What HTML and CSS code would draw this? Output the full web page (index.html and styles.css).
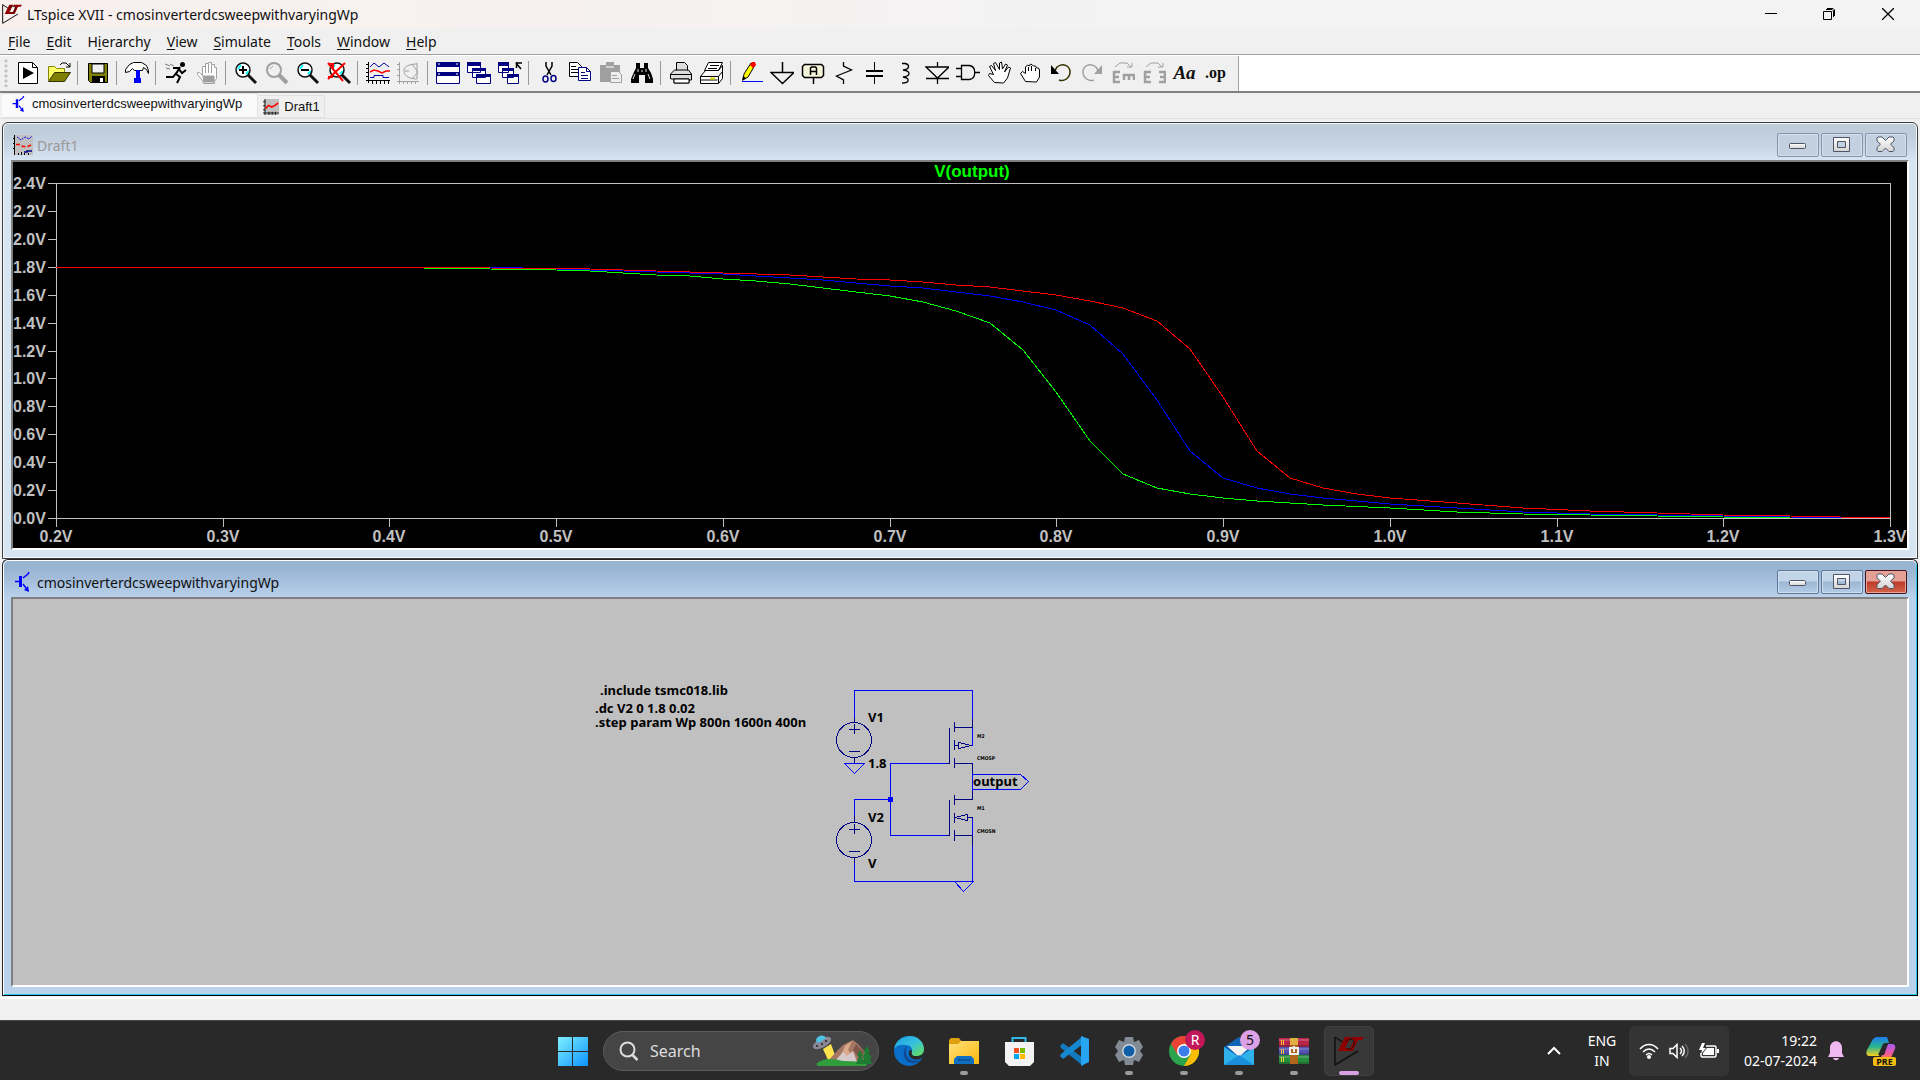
FILE: index.html
```html
<!DOCTYPE html>
<html lang="en">
<head>
<meta charset="utf-8">
<title>LTspice XVII - cmosinverterdcsweepwithvaryingWp</title>
<link rel="stylesheet" href="styles.css">
</head>
<body>
<svg class="defs" width="0" height="0" aria-hidden="true">
  <defs>
    <linearGradient id="glyph" x1="0" y1="0" x2="0" y2="1"><stop offset="0" stop-color="#fff"/><stop offset="1" stop-color="#d4d4d4"/></linearGradient>
    <linearGradient id="winlogo" x1="0" y1="0" x2="1" y2="1"><stop offset="0" stop-color="#7ff0ff"/><stop offset="1" stop-color="#0c93ff"/></linearGradient>
    <linearGradient id="folder" x1="0" y1="0" x2="1" y2="1"><stop offset="0" stop-color="#ffe07a"/><stop offset="1" stop-color="#fcb90d"/></linearGradient>
    <linearGradient id="edgeTop" x1="0" y1="0" x2="1" y2="1"><stop offset="0" stop-color="#1c9de0"/><stop offset=".5" stop-color="#35c1e0"/><stop offset="1" stop-color="#6be04a"/></linearGradient>
    <linearGradient id="copA" x1="0" y1="0" x2="0" y2="1"><stop offset="0" stop-color="#1e7cf0"/><stop offset=".5" stop-color="#27b58f"/><stop offset="1" stop-color="#f6d11e"/></linearGradient>
    <linearGradient id="copB" x1="0" y1="0" x2="0" y2="1"><stop offset="0" stop-color="#a45cf5"/><stop offset=".6" stop-color="#f0589a"/><stop offset="1" stop-color="#ff9a3c"/></linearGradient>
    <symbol id="min" viewBox="1 1 20 18"><rect x="2.500" y="8.500" width="16" height="5" rx="1" fill="url(#glyph)" stroke="#4e5468"/></symbol>
    <symbol id="max" viewBox="1 1 20 18"><path d="M2.500 2.500h16v14h-16zM6.500 6.500v6h8v-6z" fill="url(#glyph)" fill-rule="evenodd" stroke="#4e5468"/></symbol>
    <symbol id="close" viewBox="1 1 20 18"><path d="M3 2h4l3.500 3.500L14 2h4l1 1v3l-3.500 3.200L19 12.500v3l-1 1h-4l-3.500-3.500L7 16.500H3l-1-1v-3l3.500-3.300L2 6V3z" fill="url(#glyph)" stroke="#4e5468"/></symbol>
    <symbol id="lt" viewBox="0 0 30 30"><path d="M1 1v28L24 15M1 1l12 8" fill="none" stroke="#111" stroke-width="1.500"/><path d="M11 1h6l-6 11h7l-1 3H4zM18 1h12l-2 3h-4l-5 11h-4l5-11h-4z" fill="#900000"/><path d="M12 6c3-4 8-4 8 1s-4 8-7 5" fill="none" stroke="#111"/></symbol>
    <symbol id="tran" viewBox="0 0 20 20"><path d="M2 9.500h5M10 6l5-4 1-2M10 12l3 4" stroke="#00f" stroke-width="1.500" fill="none"/><path d="M6 4h3v11H6zM16 20l-5-2 4-4z" fill="#00f"/></symbol>
    <symbol id="wave" viewBox="0 0 20 20"><path fill="#c0c0c0" d="M1 0h19v20H1z"/><path d="M2.500 0v20M0 17.500h20M0 3.500h3M0 8.500h3M0 13.500h3M7.500 16v4M11.500 16v4M15.500 16v4" stroke="#000" fill="none"/><path d="M3 12l4-4 4 2 4-2 4-3" stroke="#f00" stroke-width="2" fill="none"/></symbol>
    <symbol id="wave3" viewBox="0 0 20 20"><path fill="#c0c0c0" d="M1 0h19v20H1z"/><path d="M1.500 0v20M0 3.500h2M0 8.500h2M0 13.500h2M5.500 18v2M8.500 17v3M11.500 18v2M15.500 18v2" stroke="#000" fill="none"/><path d="M4 2l4 3 4-3 4 2 3-3" stroke="#00f" fill="none" stroke-dasharray="2 1"/><path d="M3 9.500h4l3 2h5l4-2" stroke="#f00" stroke-width="1.500" fill="none" stroke-dasharray="4 2"/><path d="M11 17h3v-1h5" stroke="#000080" stroke-width="1.500" fill="none"/></symbol>
    <symbol id="lens" viewBox="0 0 24 24"><circle cx="9" cy="9" r="7" fill="#fff"/><path d="M4 8l3-4M12 13l3-3" stroke="#0ff" stroke-width="2"/><circle cx="9" cy="9" r="7" fill="none" stroke="currentColor" stroke-width="1.500"/><path d="M14 14l8 8" stroke="currentColor" stroke-width="3"/></symbol>
  </defs>
</svg>

<div class="screen">
<main class="app">
  <header class="titlebar">
    <svg class="app-icon" viewBox="0 0 30 30"><use href="#lt"/></svg>
    <h1>LTspice XVII - cmosinverterdcsweepwithvaryingWp</h1>
    <div class="caption-buttons">
      <button aria-label="Minimize"><svg viewBox="0 0 12 12"><path d="M0 5.500h12" stroke="#000"/></svg></button>
      <button aria-label="Restore"><svg viewBox="0 0 12 12"><path d="M.5 3.500h8v8h-8zM3 1.500h6l1.500 1.500v6M4 .5h6l1.500 1.500v6" fill="none" stroke="#000"/></svg></button>
      <button aria-label="Close"><svg viewBox="0 0 12 12"><path d="M0 0l12 12M12 0L0 12" stroke="#000" stroke-width="1.300"/></svg></button>
    </div>
  </header>

  <nav class="menubar">
    <button><u>F</u>ile</button><button><u>E</u>dit</button><button>H<u>i</u>erarchy</button><button><u>V</u>iew</button><button><u>S</u>imulate</button><button><u>T</u>ools</button><button><u>W</u>indow</button><button><u>H</u>elp</button>
  </nav>

  <div class="toolstrip">
  <div class="toolbar" role="toolbar">
    <span class="grip"></span>
    <button aria-label="New schematic"><svg viewBox="0 0 24 24"><path d="M2.500 1.500h14l5 5v16h-19z" fill="#fff" stroke="#000"/><path d="M16.500 1.500v5h5" fill="none" stroke="#000"/><path d="M7 6l11 6-11 6z"/></svg></button>
    <button aria-label="Open"><svg viewBox="0 0 24 24"><path d="M1.500 19.500v-14h6l2 2h8v4" fill="#ff6" stroke="#880"/><path d="M1.500 20.500l6-9h16l-6 9z" fill="#808000" stroke="#330"/><path d="M13 4l2-2h4l4 4M23 2v4h-4" fill="none" stroke="#000"/></svg></button>
    <span class="sep"></span>
    <button aria-label="Save"><svg viewBox="0 0 24 24"><path d="M2.500 2.500h19v19h-17l-2-2z" fill="#808000" stroke="#000"/><path d="M6 3h12v9H6z" fill="#efefef" stroke="#000"/><path d="M6 15h13v6H6z"/><path d="M14 17h3v4h-3z" fill="#fff"/></svg></button>
    <span class="sep"></span>
    <button aria-label="Control panel"><svg viewBox="0 0 24 24"><path d="M.5 8.500l4-5 4-2h8l5 3 2 5v3l-2-4-3-2-1 3h-8l-2-2-3 3-4 1z" fill="#fff" stroke="#000"/><path d="M11 9h4v8h1v5h-7v-5h2z" fill="#00f"/></svg></button>
    <span class="sep"></span>
    <button aria-label="Run"><svg viewBox="0 0 24 24"><circle cx="18.500" cy="3.500" r="2.500"/><path d="M16 6l-4 7 4 3-3 6M13 11l-4 5H2M9 7h5l4 5 4-3" stroke="#000" stroke-width="2" fill="none"/><path d="M1 3l5 2M2 7l4 1M6 3l4 2" stroke="#777"/></svg></button>
    <button class="off" aria-label="Halt"><svg viewBox="0 0 24 24"><path d="M8.500 22.500l-1-3-5-6v-2h2l3 3V5.500h3v-3h3v-1h3v2h3v3h2v11l-2 3v2z" fill="#fff" stroke="currentColor"/><path d="M8 15h11v6H9zM10.500 4v8M13.500 3v9M16.500 4v8" fill="currentColor" stroke="currentColor"/></svg></button>
    <span class="sep"></span>
    <button aria-label="Zoom in"><svg viewBox="0 0 24 24"><use href="#lens"/><path d="M5 9h8M9 5v8" stroke="#000" stroke-width="2"/></svg></button>
    <button class="off" aria-label="Pan"><svg viewBox="0 0 24 24"><circle cx="9" cy="9" r="7" fill="none" stroke="currentColor" stroke-width="2"/><path d="M14 14l8 8" stroke="currentColor" stroke-width="4"/><path d="M5 8l3-3" stroke="currentColor"/></svg></button>
    <button aria-label="Zoom out"><svg viewBox="0 0 24 24"><use href="#lens"/><path d="M5 9h8" stroke="#000" stroke-width="2"/></svg></button>
    <button aria-label="Zoom full extents"><svg viewBox="0 0 24 24"><use href="#lens" x="1"/><path d="M1 2l15 18M18 2L1 18M1 16h5M2 3h4v4" stroke="#f00" stroke-width="2" fill="none"/></svg></button>
    <span class="sep"></span>
    <button aria-label="Autorange"><svg viewBox="0 0 24 24"><path d="M2.500 1v21M0 19.500h24M0 3.500h3M0 7.500h3M0 11.500h3M0 15.500h3M6.500 19v4M10.500 19v4M14.500 19v4M18.500 19v4M22.500 19v4" stroke="#000"/><path d="M4 6l4-4 5 4 5-4 5 4" stroke="#00a" fill="none"/><path d="M4 11l4-2 4 1 4 2 4-2h4" stroke="#f00" stroke-width="1.500" fill="none"/><path d="M4 16.500h4v-2h9v2h6" stroke="#00a" fill="none"/></svg></button>
    <button class="off" aria-label="Smith chart"><svg viewBox="0 0 24 24"><path d="M2.500 1v22M0 20.500h22M0 3.500h3M0 8.500h3M0 14.500h3M6.500 20v3M10.500 20v3M14.500 20v3M18.500 20v3M20 2v16M20 3c-7 0-13 2-13 7s6 8 13 8M15 3l6 8-6 7M8 10h4" stroke="currentColor" fill="none"/></svg></button>
    <span class="sep"></span>
    <button aria-label="Tile windows"><svg viewBox="0 0 24 24"><path d="M.5 1.500h23v21H.5z" fill="#fff" stroke="#000080"/><path d="M0 2h24v4H0zM0 11h24v4H0z" fill="#000080"/><path d="M2 3h2M20 3h2M2 13h2M20 13h2" stroke="#fff"/></svg></button>
    <button aria-label="Cascade windows"><svg viewBox="0 0 24 24"><g fill="#fff" stroke="#000080"><path d="M.5 1.500h13v10H.5zM5.500 7.500h13v9h-13zM9.500 13.500h14v9h-14z"/></g><path d="M0 1h14v4H0zM5 7h14v3H5zM9 13h15v3H9z" fill="#000080"/></svg></button>
    <button aria-label="Close windows"><svg viewBox="0 0 24 24"><g fill="#fff" stroke="#000080"><path d="M.5 1.500h10v10H.5zM4.500 7.500h11v9h-11zM9.500 13.500h11v9h-11z"/></g><path d="M0 1h11v4H0zM4 7h12v3H4zM9 13h12v3H9z" fill="#000080"/><path d="M18 2h6M18.500 1v6M18 2l5 6" stroke="#000" stroke-width="1.500"/></svg></button>
    <span class="sep"></span>
    <button aria-label="Cut"><svg viewBox="0 0 24 24"><path d="M9 1v4l5 9M15 1v4l-5 9" stroke="#000" stroke-width="1.500" fill="none"/><ellipse cx="8.500" cy="18" rx="2.500" ry="3" fill="none" stroke="#000080" stroke-width="1.500"/><ellipse cx="16.500" cy="17.500" rx="2.500" ry="3" fill="none" stroke="#000080" stroke-width="1.500"/></svg></button>
    <button aria-label="Copy"><svg viewBox="0 0 24 24"><path d="M1.500 1.500h8l4 4v10h-12z" fill="#fff" stroke="#000"/><path d="M3 5.500h5M3 8.500h7M3 11.500h7" stroke="#000"/><path d="M10.500 6.500h8l4 4v9h-12z" fill="#fff" stroke="#000080"/><path d="M18.500 6.500v4h4M13 11.500h4M13 14.500h7M13 17.500h7" stroke="#000080" fill="none"/></svg></button>
    <button class="off" aria-label="Paste"><svg viewBox="0 0 24 24"><path d="M1 4h6V1h8v3h6v7h-9v10H1z" fill="currentColor"/><path d="M7 6h8" stroke="#fff"/><path d="M11.500 10.500h8l3 3v8h-11z" fill="#eee" stroke="currentColor"/><path d="M13 14.500h5M13 17.500h7" stroke="currentColor"/></svg></button>
    <button aria-label="Find"><svg viewBox="0 0 24 24"><path d="M6 2h4v5h4V2h4v5l3 5 2 6v4h-8v-8h-6v8H1v-4l3-7 2-4z"/><path d="M8 8v3M5 13l-2 5M18 13l2 5M16 8v3M12 9v2" stroke="#ddd"/></svg></button>
    <span class="sep"></span>
    <button aria-label="Print"><svg viewBox="0 0 24 24"><path d="M7.500 9.500v-8h8l3 3v5M1.500 18v-5l4-4h14l3 4v6h-3M5 18h15v4H5zM1.500 13.500h21M2 18h4" fill="#ddd" stroke="#000"/><path d="M5 18h15v4H5z" fill="#fff" stroke="#000"/></svg></button>
    <button aria-label="Print setup"><svg viewBox="0 0 24 24"><path d="M4.500 9.500l4-8h14l-4 8zM.5 15.500l5-6h13l4-5v13l-4 5H.5zM.5 15.500h18l4-5M18.500 15.500v7M.5 19h17" fill="#fff" stroke="#000"/><path d="M10 4.500h9M8 7.500h9" stroke="#000"/><path d="M10 17.500h5" stroke="#dd0" stroke-width="2"/></svg></button>
    <span class="sep"></span>
    <button aria-label="Draw wire"><svg viewBox="0 0 24 24"><path d="M4 19l1-6L12 2l4 2-7 12z" fill="#ff0" stroke="#000"/><path d="M11 4l2-3h3l1 3-3 3z" fill="#f00"/><path d="M3 20l1-5 3 2z"/><path d="M3 20.500h21" stroke="#00f"/></svg></button>
    <button aria-label="Ground"><svg viewBox="0 0 24 24"><path d="M12.500 1v10M1 11.500h23l-11.500 11z" stroke="#000" stroke-width="1.500" fill="none"/></svg></button>
    <button aria-label="Label net"><svg viewBox="0 0 24 24"><path d="M3.500 3.500h17l2 2v9l-2 2h-17l-2-2v-9z" fill="#f4f4d8" stroke="#000" stroke-width="1.500"/><path d="M12.500 17v6M9.500 14V7l1-1h4l1 1v7M10 10.500h6" stroke="#000" stroke-width="1.500" fill="none"/></svg></button>
    <button aria-label="Resistor"><svg viewBox="0 0 24 24"><path d="M11.500 1v4l8 4-15 6 7 4v4" stroke="#000" stroke-width="1.300" fill="none"/></svg></button>
    <button aria-label="Capacitor"><svg viewBox="0 0 24 24"><path d="M11.500 1v8M11.500 15v8" stroke="#000"/><path d="M3 10h17M3 15h17" stroke="#000" stroke-width="2"/></svg></button>
    <button aria-label="Inductor"><svg viewBox="0 0 24 24"><path d="M8 2.500h3c5 1 5 6-2 6.500 8 1 8 6 0 7 7 1 7 6-1 6" stroke="#000" stroke-width="1.300" fill="none"/></svg></button>
    <button aria-label="Diode"><svg viewBox="0 0 24 24"><path d="M12.500 1v5M12.500 17v6M1 6h23l-11.500 11zM1 17.500h23" stroke="#000" stroke-width="1.300" fill="none"/></svg></button>
    <button aria-label="Component"><svg viewBox="0 0 24 24"><path d="M5.500 4.500h8c7 1 7 13 0 14h-8zM0 7.500h5M0 15.500h5M19 11.500h5" stroke="#000" stroke-width="1.300" fill="none"/></svg></button>
    <button aria-label="Move"><svg viewBox="0 0 24 24"><path d="M7.500 21.500l-6-7 1-2 4 1-4-8 2-1 4 5-2-7 2-1 4 7V2l2-1 1 7 3-5 2 1-3 7 4-5 2 1-3 10-4 5z" fill="#fff" stroke="#000"/></svg></button>
    <button aria-label="Drag"><svg viewBox="0 0 24 24"><path d="M7.500 20.500l-5-8 2-2 3 2V6l2-2 2 1 1-2 2 1 1 1h2l1 2h2l1 2v7l-3 5z" fill="#fff" stroke="#000"/><path d="M10.500 6v4M13.500 5v5M17.500 7v3" stroke="#000"/></svg></button>
    <button aria-label="Undo"><svg viewBox="0 0 24 24"><path d="M5 11l3-5c6-5 13-1 13 5s-6 10-11 8" stroke="#330" stroke-width="1.500" fill="none"/><path d="M2 4v9h8z"/></svg></button>
    <button class="off" aria-label="Redo"><svg viewBox="0 0 24 24"><path d="M19 11l-3-5C10 1 3 5 3 11s6 10 11 8" stroke="currentColor" stroke-width="1.500" fill="none"/><path d="M22 4v9h-8z" fill="currentColor"/></svg></button>
    <button class="off" aria-label="Rotate"><svg viewBox="0 0 24 24"><path d="M2 11h7M2 16h6M2 21h7M3 10v12M13 13v6M12 14h12M18 13v6M23 13v6" stroke="currentColor" stroke-width="2.500"/><path d="M4 6l5-4h7l4 4M21 2v4h-5" stroke="currentColor" fill="none"/></svg></button>
    <button class="off" aria-label="Mirror"><svg viewBox="0 0 24 24"><path d="M2 11h7M2 16h6M2 21h7M3 10v12M17 11h7M18 16h6M17 21h7M23 10v12" stroke="currentColor" stroke-width="2.500"/><path d="M4 6l5-4h7l4 4M21 2v4h-5" stroke="currentColor" fill="none"/></svg></button>
    <button class="serif-label">Aa</button>
    <button class="op-label">.op</button>
  </div>
  </div>

  <div class="tabs" role="tablist">
    <button class="tab active" role="tab"><svg viewBox="0 0 20 20"><use href="#tran"/></svg>cmosinverterdcsweepwithvaryingWp</button>
    <button class="tab" role="tab"><svg viewBox="0 0 20 20"><use href="#wave"/></svg>Draft1</button>
  </div>

  <div class="mdi">
    <section class="window">
      <div class="window-title">
        <svg class="window-icon" viewBox="0 0 20 20"><use href="#wave3"/></svg>
        <h2>Draft1</h2>
        <button aria-label="Minimize"><svg viewBox="0 0 20 18"><use href="#min"/></svg></button>
        <button aria-label="Maximize"><svg viewBox="0 0 20 18"><use href="#max"/></svg></button>
        <button aria-label="Close"><svg viewBox="0 0 20 18"><use href="#close"/></svg></button>
      </div>
      <svg class="pane plot" viewBox="13 162 1894 386">
        <path class="axis" d="M56.500 183.500h1834v335h-1834zM48 183.500h8M48 211.500h8M48 239.500h8M48 267.500h8M48 295.500h8M48 323.500h8M48 351.500h8M48 378.500h8M48 406.500h8M48 434.500h8M48 462.500h8M48 490.500h8M48 518.500h8M56.500 518v9M223.500 518v9M389.500 518v9M556.500 518v9M723.500 518v9M890.500 518v9M1056.500 518v9M1223.500 518v9M1390.500 518v9M1557.500 518v9M1723.500 518v9M1890.500 518v9"/>
        <g class="labels">
          <text x="13" y="189">2.4V</text><text x="13" y="217">2.2V</text><text x="13" y="245">2.0V</text><text x="13" y="273">1.8V</text><text x="13" y="301">1.6V</text><text x="13" y="329">1.4V</text><text x="13" y="357">1.2V</text><text x="13" y="384">1.0V</text><text x="13" y="412">0.8V</text><text x="13" y="440">0.6V</text><text x="13" y="468">0.4V</text><text x="13" y="496">0.2V</text><text x="13" y="524">0.0V</text>
        </g>
        <g class="labels middle">
          <text x="56" y="542">0.2V</text><text x="223" y="542">0.3V</text><text x="389" y="542">0.4V</text><text x="556" y="542">0.5V</text><text x="723" y="542">0.6V</text><text x="890" y="542">0.7V</text><text x="1056" y="542">0.8V</text><text x="1223" y="542">0.9V</text><text x="1390" y="542">1.0V</text><text x="1557" y="542">1.1V</text><text x="1723" y="542">1.2V</text><text x="1890" y="542">1.3V</text>
        </g>
        <text class="trace-name" x="972" y="177">V(output)</text>
        <g class="traces">
          <polyline stroke="#0f0" points="56,267 389,267 423,268 490,269 556,270 590,271 623,273 656,275 690,276 723,279 756,281 790,284 823,288 856,292 890,296 923,302 956,311 990,323 1023,350 1056,392 1090,441 1123,474 1157,488 1190,494 1223,498 1257,501 1290,503 1323,505 1390,508 1457,512 1523,514 1590,515 1657,516 1723,517 1790,518 1890,518"/>
          <polyline stroke="#00f" points="56,267 456,267 523,268 590,270 656,272 723,274 756,276 790,278 823,280 856,283 890,286 923,288 956,292 990,296 1023,302 1056,310 1090,325 1123,354 1157,400 1190,451 1223,478 1257,488 1290,494 1323,498 1357,501 1390,504 1457,508 1523,512 1590,514 1657,515 1723,516 1790,517 1890,518"/>
          <polyline stroke="#f00" points="56,267 440,267 490,268 590,269 656,271 723,273 790,275 856,279 890,280 923,282 956,285 990,287 1023,291 1056,295 1090,301 1123,308 1157,321 1190,349 1223,397 1257,451 1290,478 1323,488 1357,494 1390,498 1457,503 1523,508 1590,511 1657,513 1723,515 1790,516 1890,518"/>
        </g>
      </svg>
    </section>

    <section class="window focused">
      <div class="window-title">
        <svg class="window-icon" viewBox="0 0 20 20"><use href="#tran"/></svg>
        <h2>cmosinverterdcsweepwithvaryingWp</h2>
        <button aria-label="Minimize"><svg viewBox="0 0 20 18"><use href="#min"/></svg></button>
        <button aria-label="Maximize"><svg viewBox="0 0 20 18"><use href="#max"/></svg></button>
        <button class="close" aria-label="Close"><svg viewBox="0 0 20 18"><use href="#close"/></svg></button>
      </div>
      <svg class="pane schematic" viewBox="13 599 1894 386">
        <path class="wire" d="M854.500 718v-27.500h118v55M890.500 763.500h56M890.500 763v72.500h56M854.500 816v-16.500h36M972.500 763v36M972.500 817v64M972.500 774.500h48l8 7-8 8h-48M854.500 863v18.500h119M844.500 763.500h20l-10 10zM954.500 881.500h19l-10 10z"/>
        <path class="part" d="M854.500 718v4M854.500 757v6M854.500 816v6M854.500 857v6M849 729.500h11M854.500 724v10M849 751.500h11M849 829.500h11M854.500 824v10M849 851.500h11M946 763.500h3.500v-36M946 835.500h3.500v-36M954.500 722v10M954.500 740v10M954.500 758v10M954.500 727.500h18v-9M954.500 745.500h4v-3l13 3-13 3v-3M954.500 763.500h18v9M954.500 795v10M954.500 813v10M954.500 830v11M954.500 799.500h18v-9M954.500 817.500l13-3v6l-13-3M967.500 817.500h5M954.500 835.500h18v10"/>
        <circle class="part" cx="854" cy="740" r="17.500"/><circle class="part" cx="854" cy="840" r="17.500"/>
        <path fill="#00f" d="M888 797h5v5h-5z"/>
        <g class="note">
          <text x="600" y="695">.include tsmc018.lib</text><text x="595" y="713">.dc V2 0 1.8 0.02</text><text x="595" y="727">.step param Wp 800n 1600n 400n</text>
          <text x="868" y="722">V1</text><text x="868" y="768">1.8</text><text x="868" y="822">V2</text><text x="868" y="868">V</text><text x="973" y="786">output</text>
        </g>
        <g class="tiny"><text x="977" y="738">M2</text><text x="977" y="760">CMOSP</text><text x="977" y="810">M1</text><text x="977" y="833">CMOSN</text></g>
      </svg>
    </section>
  </div>
  <div class="statusbar"></div>
</main>

<footer class="taskbar">
  <div class="pinned">
    <button aria-label="Start"><svg viewBox="0 0 30 30"><path d="M0 1h14v14H0zM15 1h15v14H15zM0 16h14v14H0zM15 16h15v14H15z" fill="url(#winlogo)"/></svg></button>
    <label class="search">
      <svg class="search-icon" viewBox="0 0 20 20"><circle cx="8.500" cy="8.500" r="7" fill="none" stroke="#ddd" stroke-width="2"/><path d="M13.500 14l5 5" stroke="#ddd" stroke-width="2.500"/></svg>
      <input type="text" placeholder="Search" aria-label="Search">
      <svg class="scene" viewBox="0 0 60 32"><path d="M10 14l8-5 5 14-7 4z" fill="#ffe34d"/><path d="M14 27l10-11 6-6 10-5 5 4 7 8 3 10z" fill="#a87866"/><path d="M26 25l6-14 7-5-4 9 4 5-6 7z" fill="#dba98a"/><path d="M22 26l8-9 4 4 6-5 4 11z" fill="#d5c9cc"/><path d="M40 15l3-6 8 8-3 9z" fill="#80584a"/><path d="M3 29c6-6 17-6 27-3l25 1-2 4H5z" fill="#2f9d3b"/><path d="M54 11l3 6h-2l4 6h-2l2 6H48l3-6h-2l3-6h-2zM47 15l3 6h-2l4 8h-9l3-8h-2z" fill="#1d7b32"/><ellipse cx="9" cy="8" rx="10" ry="4.500" fill="#8b8796" transform="rotate(-28 9 8)"/><path d="M3 5c1-5 8-6 10-2l-4 3-5 2z" fill="#4fc4e8"/><path d="M3 11h2M8 9h2M12 6h2" stroke="#222" stroke-width="1.500"/></svg>
    </label>
    <button aria-label="Edge"><svg viewBox="0 0 30 30"><circle cx="15" cy="15" r="15" fill="#0a6fc8"/><path d="M0 13C2 3 10 0 16 0c8 0 14 6 14 13 0 6-5 8-9 7-3 0-4-2-3-4 1-4-2-7-6-7C6 8 2 10 0 13z" fill="url(#edgeTop)"/><path d="M13 10c-4 3-5 10 0 15 4 3 10 3 14-1-8 3-15-1-15-8 0-3 1-5 1-6z" fill="#114a93"/><path d="M18 15c-1 3 0 5 4 5s7-1 8-5v6l-4 2c-6 2-12-1-11-7 0-2 2-3 3-1z" fill="#292929"/></svg></button>
    <button class="running" aria-label="File Explorer"><svg viewBox="0 0 30 30"><path d="M0 4l2-2h8l3 4h17v6H0z" fill="#e0a010"/><path d="M0 8h9l3-3h18v23H0z" fill="url(#folder)"/><path d="M5 28v-5l3-3h14l3 3v5z" fill="#0f6fc0"/><path d="M9 24h12" stroke="#053f78"/></svg></button>
    <button aria-label="Microsoft Store"><svg viewBox="0 0 30 30"><path d="M8.500 8V2h13v6" fill="none" stroke="#30b8ea" stroke-width="2"/><path d="M1 6h29v20l-4 4H5l-4-4z" fill="#f3f3f3"/><path d="M10 12h5v5h-5z" fill="#f25022"/><path d="M16 12h5v5h-5z" fill="#7fba00"/><path d="M10 18h5v5h-5z" fill="#00a4ef"/><path d="M16 18h5v5h-5z" fill="#ffb900"/></svg></button>
    <button aria-label="Visual Studio Code"><svg viewBox="0 0 30 30"><path d="M1 10l3-3 20 15v8L2 12z" fill="#1279bd"/><path d="M1 20l3 3 20-15V0L2 18z" fill="#1688cf"/><path d="M22 0l8 3v23l-8 4z" fill="#27a5f2"/></svg></button>
    <button class="running" aria-label="Settings"><svg viewBox="0 0 30 30"><path d="M11 1h8l1 5 5-2 4 7-3 4 3 4-4 7-5-2-1 5h-8l-1-5-5 2-4-7 3-4-3-4 4-7 5 2z" fill="#828b94"/><circle cx="15" cy="15" r="7" fill="#cfd6dc"/><circle cx="15" cy="15" r="5.500" fill="#0f5ea8"/></svg></button>
    <button class="running" aria-label="Chrome"><svg viewBox="0 0 30 30"><circle cx="15" cy="15" r="15" fill="#2ba24c"/><path d="M2 7.500A15 15 0 0 1 28 7.500H15L8 18z" fill="#ea4335"/><path d="M28 7.500A15 15 0 0 1 15 30l7-12-7-10.500z" fill="#fbbc05"/><circle cx="15" cy="15" r="7" fill="#fff"/><circle cx="15" cy="15" r="5.500" fill="#3b7ded"/></svg><span class="badge ruby">R</span></button>
    <button class="running" aria-label="Mail"><svg viewBox="0 0 30 30"><path d="M0 11L15 1l15 10v17H0z" fill="#0f63b4"/><path d="M3 10h24l-12 11z" fill="#f2f2f2"/><path d="M0 11l15 10 15-10v18H0z" fill="#2fb2ea"/><path d="M0 29l15-10 15 10z" fill="#1b8edb"/></svg><span class="badge">5</span></button>
    <button class="running" aria-label="WinRAR"><svg viewBox="0 0 30 30"><path d="M0 2h30v9H0z" fill="#b9254a"/><path d="M0 11h30v8H0z" fill="#5353b5"/><path d="M0 19h30v9H0z" fill="#248e3c"/><path d="M0 4h30M0 13h30M0 21h30" stroke="#fff" stroke-opacity=".35"/><path d="M0 10h30M0 18h30M0 27h30" stroke="#222" stroke-opacity=".6"/><path d="M2 4h1v5H2zM4 4h1v5H4zM2 13h1v5H2zM4 13h1v5H4zM2 21h1v5H2zM4 21h1v5H4z" fill="#fc3"/><path d="M11 2h8v26h-8z" fill="#b0661c"/><path d="M11 2h8v7h-8z" fill="#e0b040"/><path d="M11 12h8v6h-8zM15 10v6" fill="none" stroke="#eee" stroke-width="2"/></svg></button>
    <button class="current" aria-label="LTspice"><svg viewBox="0 0 30 30"><use href="#lt"/></svg></button>
  </div>
  <div class="tray">
    <button class="caret" aria-label="Show hidden icons"><svg viewBox="0 0 14 9"><path d="M1 8l6-6 6 6" fill="none" stroke="#fff" stroke-width="2"/></svg></button>
    <button class="lang">ENG<br>IN</button>
    <button class="quick" aria-label="Network, volume, battery">
      <svg width="20" height="16" viewBox="0 0 20 16"><path d="M1 6c5-6 13-6 18 0M4 9c4-4 8-4 12 0M7 12c2-2 4-2 6 0" fill="none" stroke="#fff" stroke-width="1.500"/><circle cx="10" cy="14" r="2" fill="#fff"/></svg>
      <svg width="20" height="16" viewBox="0 0 20 16"><path d="M1 5.500h3l4-4v13l-4-4H1zM11 5c2 2 2 4 0 6M13 3c3 3 3 7 0 10" fill="none" stroke="#fff" stroke-width="1.500"/><path d="M16 1c4 4 4 10 0 14" fill="none" stroke="#666" stroke-width="1.500"/></svg>
      <svg width="20" height="16" viewBox="0 0 20 16"><path d="M7 3h9l1 1v9l-1 1H3l-1-1v-3" fill="none" stroke="#fff" stroke-width="1.500"/><path d="M8 5h7v7H4v-2zM18 6h2v4h-2zM3 0L0 7h3l-1 4 5-6H4l2-5z" fill="#fff"/></svg>
    </button>
    <button class="clock">19:22<br>02-07-2024</button>
    <button class="bell" aria-label="Notifications"><svg viewBox="0 0 16 20"><path d="M0 16l2-4V7c0-9 12-9 12 0v5l2 4zM5 17h6c-1 3-5 3-6 0z" fill="#f0b8f0"/></svg></button>
    <button class="copilot" aria-label="Copilot"><svg viewBox="0 0 30 30"><path d="M7 3l3-2h11l2 6h-5l-5 13H3c-3 0-3-4-2-6z" fill="url(#copA)"/><path d="M22 8h4c4 0 4 4 2 7l-4 9H14l2-5z" fill="url(#copB)"/><path d="M17 8h5l-4 11h-6z" fill="#292929"/></svg><span>PRE</span></button>
  </div>
</footer>
</div>
</body>
</html>
```
FILE: styles.css
```css
* { box-sizing: border-box; }
body { margin: 0; background: #f0f0f0; font-family: "Noto Sans", "Open Sans", sans-serif; font-size: 14px; color: #111; }
button { margin: 0; padding: 0; border: 0; background: none; font: inherit; color: inherit; }
svg { display: block; }
h1, h2 { margin: 0; font-weight: 400; }
.defs { position: absolute; }
.screen { display: flex; flex-direction: column; min-height: 100vh; }
.app { display: flex; flex-direction: column; flex: 1; }

.titlebar { display: flex; align-items: center; height: 28px; background: linear-gradient(90deg, #f9f0ee, #f3f3f3 60%); }
.app-icon { width: 20px; height: 20px; margin: 0 5px 0 2px; }
.titlebar h1 { flex: 1; font-size: 14px; }
.caption-buttons { display: flex; padding-right: 2px; }
.caption-buttons button { display: grid; place-items: center; width: 58px; height: 28px; }
.caption-buttons button:last-child { width: 60px; }
.caption-buttons svg { width: 12px; height: 12px; }

.menubar { display: flex; height: 27px; padding-left: 1px; background: #f0f0f0; border-bottom: 1px solid #a0a0a0; }
.menubar button { padding: 0 9px 0 7px; }
.menubar u { text-underline-offset: 2px; }

.toolstrip { display: flex; background: #fff; border-top: 1px solid #fff; border-bottom: 2px solid #808080; }
.toolbar { display: flex; align-items: center; height: 35px; padding: 0 7px 1px 0; background: #f0f0f0; border-right: 1px solid #a0a0a0; }
.toolbar button { display: grid; place-items: center; width: 31px; height: 30px; }
.toolbar svg { width: 24px; height: 24px; }
.toolbar .off { color: #a0a0a0; }
.grip { width: 12px; height: 28px; background: radial-gradient(circle at 6px 2px, #c0c0c0 1px, transparent 2px) 0 0 / 12px 5px; }
.sep { width: 8px; height: 24px; border-left: 1px solid #999; margin-left: 3px; margin-right: -3px; }
.toolbar .serif-label { font: italic bold 19px "Liberation Serif", serif; }
.toolbar .op-label { font: bold 16px "Liberation Serif", serif; }

.tabs { display: flex; height: 26px; padding: 1px 2px 0; border-bottom: 1px solid #e0e0e0; font-family: "Liberation Sans", sans-serif; font-size: 13px; }
.tab { display: flex; align-items: center; gap: 5px; height: 23px; padding: 0 4px 0 5px; align-self: flex-end; border: 1px solid #e2e2e2; border-left: 0; }
.tab svg { width: 16px; height: 16px; }
.tab.active { height: 25px; padding: 0 15px 4px 9px; background: #fafafa; }

.mdi { padding: 3px 2px 0; }
.window { display: flex; flex-direction: column; padding: 1px 8px 8px; background: #d7e4f2; border: 1px solid #3c3c3c; border-radius: 6px 6px 0 0; box-shadow: inset 0 0 0 1px #f4f8fc; }
.window-title { display: flex; align-items: flex-end; gap: 2px; height: 36px; margin: 0 -7px; padding: 0 9px 3px; background: linear-gradient(#bfcddb 20%, #c7d4e3 60%, #d7e4f2); border-radius: 5px 5px 0 0; color: #999; }
.window-icon { width: 20px; height: 20px; margin-bottom: 2px; }
.window-title h2 { flex: 1; font-size: 14px; line-height: 22px; padding-left: 2px; }
.window-title button { display: grid; place-items: center; width: 42px; height: 24px; border: 1px solid #8593ad; border-radius: 2px; background: #c3d0e0; box-shadow: inset 0 0 0 1px #d3dfec; }
.window-title button svg { width: 20px; height: 18px; }
.pane { box-sizing: content-box; width: calc(100% - 4px); height: auto; border: 2px solid; border-color: #808080 #fff #fff #808080; }
.focused { background: #b9d1ea; border-color: #222 #000 #000 #222; box-shadow: inset 0 1px #fff, inset 1px 0 #fff, inset -1px -1px #26c6e8; }
.focused .window-title { background: linear-gradient(#99b4d1 20%, #a3bddb 50%, #b9d1ea); color: #111; }
.focused .window-title button { border-color: #5f7796; background: linear-gradient(#c1d4e8 45%, #9cb6d3 50%, #b4cce6); box-shadow: inset 0 0 0 1px #cfdff0; }
.focused .window-title .close { border-color: #4a0f18; background: linear-gradient(#e5a095 45%, #bd3a26 50%, #d2654e); box-shadow: inset 0 0 0 1px #e2a79c; }

.plot { background: #000; }
.axis { fill: none; stroke: #c0c0c0; shape-rendering: crispEdges; }
.labels { fill: #c0c0c0; font: bold 16px "Liberation Sans", sans-serif; }
.middle, .trace-name { text-anchor: middle; }
.trace-name { fill: #0f0; font: bold 17px "Liberation Sans", sans-serif; }
.traces { fill: none; stroke-width: 1; shape-rendering: crispEdges; }
.schematic { background: #c0c0c0; }
.wire, .part { fill: none; stroke: #00f; shape-rendering: crispEdges; }
.part { stroke: #000080; }
.note { font: bold 13px "Noto Sans", "Open Sans", sans-serif; }
.tiny { font: bold 5px "DejaVu Sans Condensed", "DejaVu Sans", sans-serif; }
.statusbar { min-height: 23px; flex: 1; border-top: 2px solid #fff; margin-top: 1px; background: #f0f0f0; }

.taskbar { display: grid; grid-template-columns: 1fr auto 1fr; align-items: center; height: 60px; background: #292929; border-top: 1px solid #484848; color: #fff; }
.pinned { grid-column: 2; display: flex; align-items: center; gap: 5px; padding-left: 2px; }
.pinned button { position: relative; display: grid; place-items: center; width: 50px; height: 50px; border-radius: 5px; }
.pinned button > svg { width: 30px; height: 30px; }
.running::after, .current::after { content: ""; position: absolute; bottom: 1px; left: 21px; width: 8px; height: 4px; border-radius: 2px; background: #9a9a9a; }
.current { background: #383838; border: 1px solid #404040; }
.current::after { left: 14px; width: 20px; background: #d9a0e4; bottom: 0; }
.badge { position: absolute; top: 4px; right: 4px; width: 20px; height: 20px; border-radius: 10px; background: #dca0e6; color: #111; font-size: 14px; line-height: 20px; text-align: center; }
.badge.ruby { background: #c2185b; color: #fff; }
.search { display: flex; align-items: center; width: 276px; height: 40px; padding: 0 5px 0 15px; border: 1px solid #5c5c5c; border-radius: 20px; background: #454545; }
.search-icon { width: 20px; height: 20px; }
.search input { flex: 1; min-width: 0; padding: 0 0 0 11px; border: 0; outline: 0; background: none; color: #ddd; font: inherit; font-size: 16px; }
.search input::placeholder { color: #ddd; opacity: 1; }
.scene { width: 60px; height: 32px; }
.tray { display: flex; justify-content: flex-end; align-items: center; padding-right: 24px; font-size: 14px; line-height: 20px; }
.caret { padding: 0 16px; }
.caret svg { width: 14px; height: 9px; }
.lang { width: 50px; margin-right: 2px; text-align: center; }
.quick { display: flex; align-items: center; justify-content: center; gap: 10px; width: 100px; height: 50px; border-radius: 5px; background: #343434; }
.clock { width: 88px; text-align: right; }
.bell { display: grid; place-items: center; width: 38px; height: 40px; }
.bell svg { width: 16px; height: 20px; }
.copilot { position: relative; width: 30px; height: 30px; margin-left: 11px; }
.copilot span { position: absolute; left: 7px; bottom: 0; width: 23px; border-radius: 2px; background: #f5bd14; color: #111; font: bold 9px/9px "Noto Sans", sans-serif; text-align: center; }
```
